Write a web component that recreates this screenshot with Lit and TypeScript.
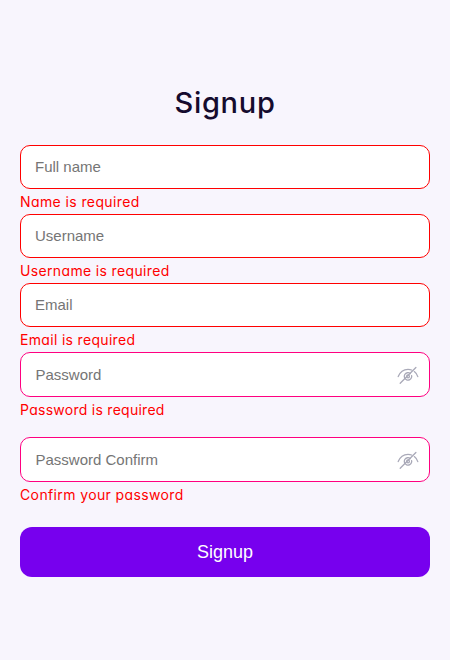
import { LitElement, html, css, svg } from "lit";
import { customElement, property } from "lit/decorators.js";

interface Field {
  label: string;
  error: string;
  secret?: boolean;
  tracking: number;
}

const FIELDS: Field[] = [
  { label: "Full name", error: "Name is required", tracking: 0.4 },
  { label: "Username", error: "Username is required", tracking: 0.35 },
  { label: "Email", error: "Email is required", tracking: 0.32 },
  { label: "Password", error: "Password is required", secret: true, tracking: 0.27 },
  { label: "Password Confirm", error: "Confirm your password", secret: true, tracking: 0.38 },
];

const eyeOff = svg`
  <path d="M1.200 12.600C3 8 6.700 5.300 11 5.300c1.300 0 2.500.2 3.600.7M17.300 7.600c1.600 1.200 2.800 2.900 3.500 5" />
  <path d="M13.300 9.500a3.700 3.700 0 1 0 1.300 3.700q.2-.8 0-1.600" />
  <circle cx="11" cy="12.400" r="1.400" />
  <path d="M3.200 19.300 18.900 3.500" />
`;

@customElement("form-field")
export class FormField extends LitElement {
  @property({ attribute: false }) field!: Field;

  static styles = css`
    :host { display: block; }
    .box {
      box-sizing: border-box;
      display: flex;
      align-items: center;
      height: 44px;
      padding: 0 10px 0 14px;
      border: 1px solid #ff0000;
      border-radius: 10px;
      background: #fff;
    }
    .box.secret { height: 45px; border-color: #ff0080; padding-left: 14.5px; }
    .input {
      flex: 1;
      min-width: 0;
      padding: 0;
      border: 0;
      outline: 0;
      background: transparent;
      font: 15px/18px "Liberation Sans", Arial, sans-serif;
    }
    .input::placeholder { color: #757575; opacity: 1; }
    .eye {
      width: 22px;
      height: 22px;
      fill: none;
      stroke: #a9a9b8;
      stroke-width: 1.3;
      stroke-linecap: round;
    }
    .error {
      display: block;
      height: 25px;
      font: 14px/26px Inter, sans-serif;
      font-feature-settings: "cv11" 1;
      color: #ff0000;
      white-space: nowrap;
    }
  `;

  render() {
    const { label, error, secret, tracking } = this.field;
    return html`
      <div class="box ${secret ? "secret" : ""}">
        <input class="input" type=${secret ? "password" : "text"} placeholder=${label} />
        ${secret ? html`<svg class="eye" viewBox="0 0 22 22">${eyeOff}</svg>` : ""}
      </div>
      <span class="error" style="letter-spacing:${tracking}px">${error}</span>
    `;
  }
}

@customElement("app-root")
export class AppRoot extends LitElement {
  static styles = css`
    :host {
      display: block;
      box-sizing: border-box;
      height: 660px;
      padding: 81px 20px 0;
      background: #f8f5fd;
    }
    .title {
      margin: 0 0 19px;
      font: 550 29px/44px Inter, sans-serif;
      padding-bottom: 1px;
      letter-spacing: 0.7px;
      font-feature-settings: "cv11" 1;
      text-align: center;
      color: #150b2e;
    }
    .gap { margin-top: 15px; }
    .submit {
      display: block;
      width: 100%;
      height: 50px;
      margin-top: 20px;
      padding: 0;
      border: 0;
      border-radius: 12px;
      background: #7700ee;
      color: #fff;
      font: 18px "Liberation Sans", Arial, sans-serif;
    }
  `;

  render() {
    return html`
      <h1 class="title">Signup</h1>
      ${FIELDS.map(
        (f, i) => html`<form-field class=${i === 4 ? "gap" : ""} .field=${f}></form-field>`,
      )}
      <button class="submit">Signup</button>
    `;
  }
}
